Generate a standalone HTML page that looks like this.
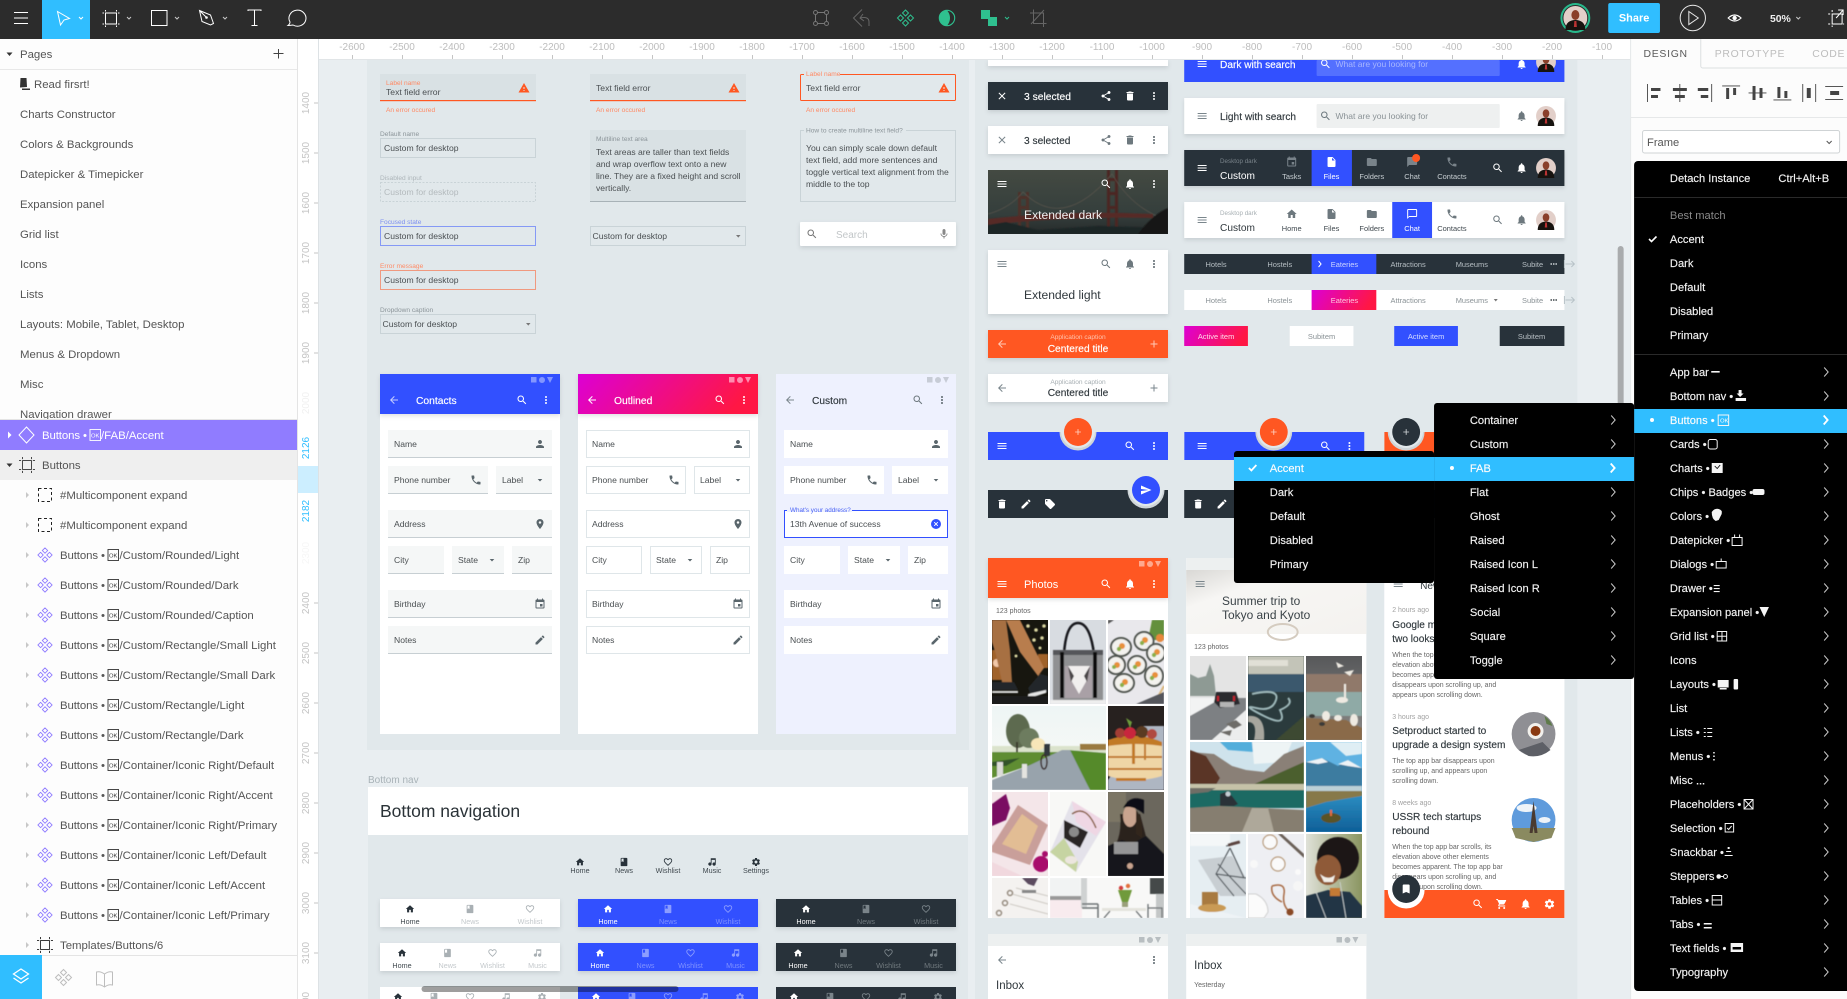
<!DOCTYPE html>
<html lang="en"><head><meta charset="utf-8"><title>Figma</title>
<style>
html,body{margin:0;padding:0;background:#e9eef1;width:1847px;height:999px;overflow:hidden}
svg{display:block;font-family:"Liberation Sans",sans-serif}
.s{font-size:11.4px;fill:#555}
.r{font-size:10px;fill:#bdbdbd;text-anchor:middle}
.rv{font-size:10px;fill:#c4c4c4;text-anchor:middle}
.t{font-size:8.6px;fill:#4a4f52}
.tl{font-size:6.6px;fill:#8b9499}
.e{font-size:6.6px;fill:#ff8a65}
.m{font-size:11.2px;fill:#f2f2f2;stroke:#f2f2f2;stroke-width:.15px}
.h{font-size:10.3px;fill:#fff;stroke:#fff;stroke-width:.15px}
.n{font-size:7.2px;text-anchor:middle}
.tb{font-size:7.5px;text-anchor:middle}
.b{font-size:10.2px;fill:#30383d;stroke:#30383d;stroke-width:.15px}
.a{font-size:7px;fill:#666}
.sh{filter:drop-shadow(0 2px 2px rgba(40,50,60,.14))}
</style></head><body>
<svg xmlns="http://www.w3.org/2000/svg" width="1847" height="999" viewBox="0 0 1847 999">
<defs>
<filter id="bl" x="-5%" y="-5%" width="110%" height="110%"><feGaussianBlur stdDeviation=".55"/></filter>
<symbol id="menu" viewBox="0 0 24 24"><path d="M3 18h18v-2H3v2zm0-5h18v-2H3v2zm0-7v2h18V6H3z"/></symbol>
<symbol id="search" viewBox="0 0 24 24"><path d="M15.5 14h-.79l-.28-.27C15.41 12.59 16 11.11 16 9.5 16 5.91 13.09 3 9.5 3S3 5.91 3 9.5 5.91 16 9.5 16c1.61 0 3.09-.59 4.23-1.57l.27.28v.79l5 4.99L20.49 19l-4.99-5zm-6 0C7.01 14 5 11.99 5 9.5S7.01 5 9.5 5 14 7.01 14 9.5 11.99 14 9.5 14z"/></symbol>
<symbol id="dots" viewBox="0 0 24 24"><path d="M12 8c1.1 0 2-.9 2-2s-.9-2-2-2-2 .9-2 2 .9 2 2 2zm0 2c-1.1 0-2 .9-2 2s.9 2 2 2 2-.9 2-2-.9-2-2-2zm0 6c-1.1 0-2 .9-2 2s.9 2 2 2 2-.9 2-2-.9-2-2-2z"/></symbol>
<symbol id="back" viewBox="0 0 24 24"><path d="M20 11H7.83l5.59-5.59L12 4l-8 8 8 8 1.41-1.41L7.83 13H20v-2z"/></symbol>
<symbol id="person" viewBox="0 0 24 24"><path d="M12 12c2.21 0 4-1.79 4-4s-1.79-4-4-4-4 1.79-4 4 1.79 4 4 4zm0 2c-2.67 0-8 1.34-8 4v2h16v-2c0-2.66-5.33-4-8-4z"/></symbol>
<symbol id="phone" viewBox="0 0 24 24"><path d="M6.62 10.79c1.44 2.83 3.76 5.14 6.59 6.59l2.2-2.2c.27-.27.67-.36 1.02-.24 1.12.37 2.33.57 3.57.57.55 0 1 .45 1 1V20c0 .55-.45 1-1 1-9.39 0-17-7.61-17-17 0-.55.45-1 1-1h3.5c.55 0 1 .45 1 1 0 1.25.2 2.45.57 3.57.11.35.03.74-.25 1.02l-2.2 2.2z"/></symbol>
<symbol id="place" viewBox="0 0 24 24"><path d="M12 2C8.13 2 5 5.13 5 9c0 5.25 7 13 7 13s7-7.75 7-13c0-3.87-3.13-7-7-7zm0 9.5c-1.38 0-2.5-1.12-2.5-2.5s1.12-2.5 2.5-2.5 2.5 1.12 2.5 2.5-1.12 2.5-2.5 2.5z"/></symbol>
<symbol id="event" viewBox="0 0 24 24"><path d="M17 12h-5v5h5v-5zM16 1v2H8V1H6v2H5c-1.11 0-1.99.9-1.99 2L3 19c0 1.1.89 2 2 2h14c1.1 0 2-.9 2-2V5c0-1.1-.9-2-2-2h-1V1h-2zm3 18H5V8h14v11z"/></symbol>
<symbol id="edit" viewBox="0 0 24 24"><path d="M3 17.25V21h3.75L17.81 9.94l-3.75-3.75L3 17.25zM20.71 7.04c.39-.39.39-1.02 0-1.41l-2.34-2.34c-.39-.39-1.02-.39-1.41 0l-1.83 1.83 3.75 3.75 1.83-1.83z"/></symbol>
<symbol id="trash" viewBox="0 0 24 24"><path d="M6 19c0 1.1.9 2 2 2h8c1.1 0 2-.9 2-2V7H6v12zM19 4h-3.5l-1-1h-5l-1 1H5v2h14V4z"/></symbol>
<symbol id="share" viewBox="0 0 24 24"><path d="M18 16.08c-.76 0-1.44.3-1.96.77L8.91 12.7c.05-.23.09-.46.09-.7s-.04-.47-.09-.7l7.05-4.11c.54.5 1.25.81 2.04.81 1.66 0 3-1.34 3-3s-1.34-3-3-3-3 1.34-3 3c0 .24.04.47.09.7L8.04 9.81C7.5 9.31 6.79 9 6 9c-1.66 0-3 1.34-3 3s1.34 3 3 3c.79 0 1.5-.31 2.04-.81l7.12 4.16c-.05.21-.08.43-.08.65 0 1.61 1.31 2.92 2.92 2.92 1.61 0 2.92-1.31 2.92-2.92s-1.31-2.92-2.92-2.92z"/></symbol>
<symbol id="close" viewBox="0 0 24 24"><path d="M19 6.41L17.59 5 12 10.59 6.41 5 5 6.41 10.59 12 5 17.59 6.41 19 12 13.41 17.59 19 19 17.59 13.41 12z"/></symbol>
<symbol id="bell" viewBox="0 0 24 24"><path d="M12 22c1.1 0 2-.9 2-2h-4c0 1.1.89 2 2 2zm6-6v-5c0-3.07-1.64-5.64-4.5-6.32V4c0-.83-.67-1.5-1.5-1.5s-1.5.67-1.5 1.5v.68C7.63 5.36 6 7.92 6 11v5l-2 2v1h16v-1l-2-2z"/></symbol>
<symbol id="add" viewBox="0 0 24 24"><path d="M19 13h-6v6h-2v-6H5v-2h6V5h2v6h6v2z"/></symbol>
<symbol id="home" viewBox="0 0 24 24"><path d="M10 20v-6h4v6h5v-8h3L12 3 2 12h3v8z"/></symbol>
<symbol id="heart" viewBox="0 0 24 24"><path d="M16.5 3c-1.74 0-3.41.81-4.5 2.09C10.91 3.81 9.24 3 7.5 3 4.42 3 2 5.42 2 8.5c0 3.78 3.4 6.86 8.55 11.54L12 21.35l1.45-1.32C18.6 15.36 22 12.28 22 8.5 22 5.42 19.58 3 16.5 3zm-4.4 15.55l-.1.1-.1-.1C7.14 14.24 4 11.39 4 8.5 4 6.5 5.5 5 7.5 5c1.54 0 3.04.99 3.57 2.36h1.87C13.46 5.99 14.96 5 16.5 5c2 0 3.5 1.5 3.5 3.5 0 2.89-3.14 5.74-7.9 10.05z"/></symbol>
<symbol id="music" viewBox="0 0 24 24"><path d="M9 3v10.55A4 4 0 1 0 11 17V7h8v6.55A4 4 0 1 0 21 17V3H9z"/></symbol>
<symbol id="gear" viewBox="0 0 24 24"><path d="M19.14 12.94c.04-.3.06-.61.06-.94 0-.32-.02-.64-.07-.94l2.03-1.58c.18-.14.23-.41.12-.61l-1.92-3.32c-.12-.22-.37-.29-.59-.22l-2.39.96c-.5-.38-1.03-.7-1.62-.94l-.36-2.54c-.04-.24-.24-.41-.48-.41h-3.84c-.24 0-.43.17-.47.41l-.36 2.54c-.59.24-1.13.57-1.62.94l-2.39-.96c-.22-.08-.47 0-.59.22L2.74 8.87c-.12.21-.08.47.12.61l2.03 1.58c-.05.3-.09.63-.09.94s.02.64.07.94l-2.03 1.58c-.18.14-.23.41-.12.61l1.92 3.32c.12.22.37.29.59.22l2.39-.96c.5.38 1.03.7 1.62.94l.36 2.54c.05.24.24.41.48.41h3.84c.24 0 .44-.17.47-.41l.36-2.54c.59-.24 1.13-.56 1.62-.94l2.39.96c.22.08.47 0 .59-.22l1.92-3.32c.12-.22.07-.47-.12-.61l-2.01-1.58zM12 15.6c-1.98 0-3.6-1.62-3.6-3.6s1.62-3.6 3.6-3.6 3.6 1.62 3.6 3.6-1.62 3.6-3.6 3.6z"/></symbol>
<symbol id="folder" viewBox="0 0 24 24"><path d="M10 4H4c-1.1 0-1.99.9-1.99 2L2 18c0 1.1.9 2 2 2h16c1.1 0 2-.9 2-2V8c0-1.1-.9-2-2-2h-8l-2-2z"/></symbol>
<symbol id="file" viewBox="0 0 24 24"><path d="M6 2c-1.1 0-1.99.9-1.99 2L4 20c0 1.1.89 2 1.99 2H18c1.1 0 2-.9 2-2V8l-6-6H6zm7 7V3.5L18.5 9H13z"/></symbol>
<symbol id="chat" viewBox="0 0 24 24"><path d="M20 2H4c-1.1 0-2 .9-2 2v18l4-4h14c1.1 0 2-.9 2-2V4c0-1.1-.9-2-2-2z"/></symbol>
<symbol id="chato" viewBox="0 0 24 24"><path d="M20 2H4c-1.1 0-2 .9-2 2v18l4-4h14c1.1 0 2-.9 2-2V4c0-1.1-.9-2-2-2zm0 14H6l-2 2V4h16v12z"/></symbol>
<symbol id="warn" viewBox="0 0 24 24"><path d="M1 21h22L12 2 1 21zm12-3h-2v-2h2v2zm0-4h-2v-4h2v4z"/></symbol>
<symbol id="mic" viewBox="0 0 24 24"><path d="M12 14c1.66 0 3-1.34 3-3V5c0-1.66-1.34-3-3-3S9 3.34 9 5v6c0 1.66 1.34 3 3 3zm5.3-3c0 3-2.54 5.1-5.3 5.1S6.7 14 6.7 11H5c0 3.41 2.72 6.23 6 6.72V21h2v-3.28c3.28-.48 6-3.3 6-6.72h-1.7z"/></symbol>
<symbol id="send" viewBox="0 0 24 24"><path d="M2.01 21L23 12 2.01 3 2 10l15 2-15 2z"/></symbol>
<symbol id="tag" viewBox="0 0 24 24"><path d="M21.41 11.58l-9-9C12.05 2.22 11.55 2 11 2H4c-1.1 0-2 .9-2 2v7c0 .55.22 1.05.59 1.42l9 9c.36.36.86.58 1.41.58.55 0 1.05-.22 1.41-.59l7-7c.37-.36.59-.86.59-1.41 0-.55-.23-1.06-.59-1.42zM5.5 7C4.67 7 4 6.33 4 5.5S4.67 4 5.5 4 7 4.67 7 5.5 6.33 7 5.5 7z"/></symbol>
<symbol id="cart" viewBox="0 0 24 24"><path d="M7 18c-1.1 0-1.99.9-1.99 2S5.9 22 7 22s2-.9 2-2-.9-2-2-2zM1 2v2h2l3.6 7.59-1.35 2.45c-.16.28-.25.61-.25.96 0 1.1.9 2 2 2h12v-2H7.42c-.14 0-.25-.11-.25-.25l.03-.12.9-1.63h7.45c.75 0 1.41-.41 1.75-1.03l3.58-6.49c.08-.14.12-.31.12-.48 0-.55-.45-1-1-1H5.21l-.94-2H1zm16 16c-1.1 0-1.99.9-1.99 2s.89 2 1.99 2 2-.9 2-2-.9-2-2-2z"/></symbol>
<symbol id="mark" viewBox="0 0 24 24"><path d="M17 3H7c-1.1 0-1.99.9-1.99 2L5 21l7-3 7 3V5c0-1.1-.9-2-2-2z"/></symbol>
<symbol id="news" viewBox="0 0 24 24"><path d="M18 2H6c-1.1 0-2 .9-2 2v16c0 1.1.9 2 2 2h12c1.1 0 2-.9 2-2V4c0-1.1-.9-2-2-2zM6 4h5v8l-2.5-1.5L6 12V4z"/></symbol>
<symbol id="st" viewBox="0 0 24 10"><rect x="0" y="2" width="5.5" height="5.5"/><circle cx="11" cy="5" r="3"/><path d="M16 2h6l-3 6z"/></symbol>
<symbol id="cmp" viewBox="0 0 18 18"><path d="M9 1l3 3-3 3-3-3zM14 6l3 3-3 3-3-3zM9 11l3 3-3 3-3-3zM4 6l3 3-3 3-3-3z"/></symbol>
<symbol id="frm" viewBox="0 0 18 18"><rect x="4" y="4" width="10" height="10"/><path d="M4 0v2.4M14 0v2.4M4 15.6V18M14 15.6V18M0 4h2.4M0 14h2.4M15.6 4H18M15.6 14H18"/></symbol>
<symbol id="av" viewBox="0 0 24 24"><circle cx="12" cy="12" r="12" fill="#e2cfc9"/><path d="M2 24c0-7 4-10 10-10s10 3 10 10z" fill="#17130f"/><ellipse cx="12" cy="9" rx="4" ry="5" fill="#8a3f2a"/><path d="M11 15h2l.5 6h-3z" fill="#b33"/></symbol>
<path id="ch" d="M-2-4.5l4 4.5-4 4.5" fill="none" stroke="#c8c8c8" stroke-width="1"/>
<path id="chw" d="M-2.5-4.5l4 4.5-4 4.5" fill="none" stroke="#fff" stroke-width="1.8"/>
<linearGradient id="grad" x1="0" y1="0" x2="1" y2=".2"><stop offset="0" stop-color="#dc00d4"/><stop offset="1" stop-color="#ff1744"/></linearGradient>
<linearGradient id="br" x1="0" y1="0" x2="0" y2="1"><stop offset="0" stop-color="#444a42"/><stop offset=".7" stop-color="#343e3c"/><stop offset="1" stop-color="#262a2a"/></linearGradient>
<linearGradient id="tk" x1="0" y1="0" x2="1" y2="1"><stop offset="0" stop-color="#d9d8d5"/><stop offset=".3" stop-color="#f7f6f4"/><stop offset="1" stop-color="#f4f2ef"/></linearGradient>
<linearGradient id="v1" x1="0" y1="0" x2="0" y2="1"><stop offset="0" stop-color="#eef5f5"/><stop offset="1" stop-color="#fbfbf6"/></linearGradient>
<linearGradient id="lake" x1="0" y1="0" x2="0" y2="1"><stop offset="0" stop-color="#2c8cc0"/><stop offset="1" stop-color="#0e5f98"/></linearGradient>
<linearGradient id="sw" x1="0" y1="0" x2="0" y2="1"><stop offset="0" stop-color="#57585a"/><stop offset="1" stop-color="#8b8a88"/></linearGradient>
<linearGradient id="wh" x1="0" y1="0" x2="1" y2="0"><stop offset="0" stop-color="#dfe1d8"/><stop offset="1" stop-color="#8a9560"/></linearGradient>
</defs>

<rect width="1847" height="999" fill="#e9eef1"/>
<rect x="367" y="60" width="602" height="690" fill="#e1e8eb"/>
<rect x="975" y="60" width="602.400" height="939" fill="#e1e8eb"/>
<rect x="368" y="787" width="600" height="212" fill="#e1e8eb"/>

<!-- Text field col 1 -->
<rect x="380" y="74" width="156" height="27" fill="#d9e1e4"/><rect x="380" y="100" width="156" height="1.2" fill="#ff5722"/>
<text x="386" y="85" class="e">Label name</text><text x="386" y="95" class="t">Text field error</text>
<use href="#warn" x="518" y="82" width="12" height="12" fill="#ff5722"/>
<text x="386" y="112" class="e">An error occured</text>
<text x="380" y="136" class="tl">Default name</text>
<rect x="380.5" y="138.5" width="155" height="19" fill="none" stroke="#c9d3d7"/><text x="384" y="151" class="t">Custom for desktop</text>
<text x="380" y="180" class="tl" opacity=".6">Disabled input</text>
<rect x="380.5" y="182.5" width="155" height="19" fill="none" stroke="#c9d3d7" stroke-dasharray="2 1.5"/><text x="384" y="195" class="t" opacity=".3">Custom for desktop</text>
<text x="380" y="224" class="tl" style="fill:#7d8ff0">Focused state</text>
<rect x="380.5" y="226.5" width="155" height="19" fill="none" stroke="#8599f5"/><text x="384" y="239" class="t">Custom for desktop</text>
<text x="380" y="268" class="e">Error message</text>
<rect x="380.5" y="270.5" width="155" height="19" fill="none" stroke="#f0997f"/><text x="384" y="283" class="t">Custom for desktop</text>
<text x="380" y="312" class="tl">Dropdown caption</text>
<rect x="380.5" y="314.5" width="155" height="19" fill="none" stroke="#c9d3d7"/><text x="382.5" y="327" class="t">Custom for desktop</text><path d="M526 323h4.5l-2.2 2.6z" fill="#777"/>

<!-- Text field col 2 -->
<rect x="590" y="74" width="156" height="27" fill="#d9e1e4"/><rect x="590" y="100" width="156" height="1.2" fill="#ff5722"/>
<text x="596" y="91" class="t">Text field error</text><use href="#warn" x="728" y="82" width="12" height="12" fill="#ff5722"/>
<text x="596" y="112" class="e">An error occured</text>
<rect x="590" y="130" width="156" height="72" fill="#d9e1e4"/><rect x="590" y="201" width="156" height="1" fill="#a8b2b7"/>
<text x="596" y="141" class="tl">Multiline text area</text>
<text x="596" y="155" class="t">Text areas are taller than text fields</text>
<text x="596" y="167" class="t">and wrap overflow text onto a new</text>
<text x="596" y="179" class="t">line. They are a fixed height and scroll</text>
<text x="596" y="191" class="t">vertically.</text>
<rect x="590.5" y="226.5" width="155" height="19" fill="none" stroke="#c9d3d7"/><text x="592.5" y="239" class="t">Custom for desktop</text><path d="M736 235h4.5l-2.2 2.6z" fill="#777"/>

<!-- Text field col 3 -->
<rect x="800.5" y="74.5" width="155" height="26" rx="1" fill="none" stroke="#ff5722"/><rect x="804" y="72" width="36" height="5" fill="#e1e8eb"/><text x="806" y="76" class="e">Label name</text>
<text x="806" y="91" class="t">Text field error</text><use href="#warn" x="938" y="82" width="12" height="12" fill="#ff5722"/>
<text x="806" y="112" class="e">An error occured</text>
<rect x="800.5" y="130.5" width="155" height="71" fill="none" stroke="#c9d3d7"/><rect x="804" y="128" width="102" height="5" fill="#e1e8eb"/><text x="806" y="132.500" class="tl">How to create multiline text field?</text>
<text x="806" y="151" class="t">You can simply scale down default</text>
<text x="806" y="163" class="t">text field, add more sentences and</text>
<text x="806" y="175" class="t">toggle vertical text alignment from the</text>
<text x="806" y="187" class="t">middle to the top</text>
<rect class="sh" x="800" y="222" width="156" height="24" rx="1" fill="#fff"/>
<use href="#search" x="806" y="228" width="12" height="12" fill="#777"/><text x="836" y="238" font-size="10" fill="#c2c6c8">Search</text><use href="#mic" x="938" y="228" width="12" height="12" fill="#888"/>

<!-- Phone cards -->
<rect x="380" y="374" width="180" height="360" fill="#fff"/><rect class="sh" x="380" y="374" width="180" height="40" fill="#3250ff"/>
<use href="#st" x="531" y="375" width="24" height="10" fill="#8396ff"/>
<use href="#back" x="388" y="394" width="12" height="12" fill="#c5cdff"/><text x="416" y="404" class="h">Contacts</text>
<use href="#search" x="516" y="394" width="12" height="12" fill="#fff"/><use href="#dots" x="540" y="394" width="12" height="12" fill="#fff"/>
<g fill="#f5f7f7"><rect x="388" y="430" width="164" height="28"/><rect x="388" y="466" width="100" height="28"/><rect x="496" y="466" width="56" height="28"/><rect x="388" y="510" width="164" height="28"/><rect x="388" y="546" width="56" height="28"/><rect x="452" y="546" width="52" height="28"/><rect x="512" y="546" width="40" height="28"/><rect x="388" y="590" width="164" height="28"/><rect x="388" y="626" width="164" height="28"/></g>
<g fill="#c7cfd3"><rect x="388" y="457" width="164" height="1"/><rect x="388" y="493" width="100" height="1"/><rect x="496" y="493" width="56" height="1"/><rect x="388" y="537" width="164" height="1"/><rect x="388" y="573" width="56" height="1"/><rect x="452" y="573" width="52" height="1"/><rect x="512" y="573" width="40" height="1"/><rect x="388" y="617" width="164" height="1"/><rect x="388" y="653" width="164" height="1"/></g>
<text x="394" y="447" class="t">Name</text><text x="394" y="483" class="t">Phone number</text><text x="502" y="483" class="t">Label</text><text x="394" y="527" class="t">Address</text><text x="394" y="563" class="t">City</text><text x="458" y="563" class="t">State</text><text x="518" y="563" class="t">Zip</text><text x="394" y="607" class="t">Birthday</text><text x="394" y="643" class="t">Notes</text>
<g fill="#5a666c"><use href="#person" x="534" y="438" width="12" height="12"/><use href="#phone" x="470" y="474" width="12" height="12"/><path d="M537.700 479h4.600l-2.300 2.500z"/><use href="#place" x="534" y="518" width="12" height="12"/><path d="M489.700 559h4.600l-2.300 2.500z"/><use href="#event" x="534" y="598" width="12" height="12"/><use href="#edit" x="534" y="634" width="12" height="12"/></g>

<rect x="578" y="374" width="180" height="360" fill="#fff"/><rect class="sh" x="578" y="374" width="180" height="40" fill="url(#grad)"/>
<use href="#st" x="729" y="375" width="24" height="10" fill="#ff8db0"/>
<use href="#back" x="586" y="394" width="12" height="12" fill="#fff"/><text x="614" y="404" class="h">Outlined</text>
<use href="#search" x="714" y="394" width="12" height="12" fill="#fff"/><use href="#dots" x="738" y="394" width="12" height="12" fill="#fff"/>
<g fill="#fff" stroke="#dfe6e9"><rect x="586.500" y="430.500" width="163" height="27"/><rect x="586.500" y="466.500" width="99" height="27"/><rect x="694.500" y="466.500" width="55" height="27"/><rect x="586.500" y="510.500" width="163" height="27"/><rect x="586.500" y="546.500" width="55" height="27"/><rect x="650.500" y="546.500" width="51" height="27"/><rect x="710.500" y="546.500" width="39" height="27"/><rect x="586.500" y="590.500" width="163" height="27"/><rect x="586.500" y="626.500" width="163" height="27"/></g>
<text x="592" y="447" class="t">Name</text><text x="592" y="483" class="t">Phone number</text><text x="700" y="483" class="t">Label</text><text x="592" y="527" class="t">Address</text><text x="592" y="563" class="t">City</text><text x="656" y="563" class="t">State</text><text x="716" y="563" class="t">Zip</text><text x="592" y="607" class="t">Birthday</text><text x="592" y="643" class="t">Notes</text>
<g fill="#5a666c"><use href="#person" x="732" y="438" width="12" height="12"/><use href="#phone" x="668" y="474" width="12" height="12"/><path d="M735.700 479h4.600l-2.300 2.500z"/><use href="#place" x="732" y="518" width="12" height="12"/><path d="M687.700 559h4.600l-2.300 2.500z"/><use href="#event" x="732" y="598" width="12" height="12"/><use href="#edit" x="732" y="634" width="12" height="12"/></g>

<rect x="776" y="374" width="180" height="360" fill="#eef1fe"/>
<use href="#st" x="927" y="375" width="24" height="10" fill="#c7ccd6"/>
<use href="#back" x="784" y="394" width="12" height="12" fill="#7a868c"/><text x="812" y="404" class="b">Custom</text>
<use href="#search" x="912" y="394" width="12" height="12" fill="#6d787e"/><use href="#dots" x="936" y="394" width="12" height="12" fill="#5a666c"/>
<g fill="#fff"><rect x="784" y="430" width="164" height="28"/><rect x="784" y="466" width="100" height="28"/><rect x="892" y="466" width="56" height="28"/><rect x="784.500" y="510.500" width="163" height="27" stroke="#3250ff"/><rect x="784" y="546" width="56" height="28"/><rect x="848" y="546" width="52" height="28"/><rect x="908" y="546" width="40" height="28"/><rect x="784" y="590" width="164" height="28"/><rect x="784" y="626" width="164" height="28"/></g>
<rect x="787" y="506" width="65" height="6" fill="#eef1fe"/><text x="790" y="512" font-size="6.300" fill="#4a63f5">What's your address?</text>
<text x="790" y="447" class="t">Name</text><text x="790" y="483" class="t">Phone number</text><text x="898" y="483" class="t">Label</text><text x="790" y="527" class="t">13th Avenue of success</text><text x="790" y="563" class="t">City</text><text x="854" y="563" class="t">State</text><text x="914" y="563" class="t">Zip</text><text x="790" y="607" class="t">Birthday</text><text x="790" y="643" class="t">Notes</text>
<g fill="#5a666c"><use href="#person" x="930" y="438" width="12" height="12"/><use href="#phone" x="866" y="474" width="12" height="12"/><path d="M933.700 479h4.600l-2.300 2.500z"/><path d="M885.700 559h4.600l-2.300 2.500z"/><use href="#event" x="930" y="598" width="12" height="12"/><use href="#edit" x="930" y="634" width="12" height="12"/></g>
<circle cx="936" cy="524" r="5" fill="#3250ff"/><path d="M934.200 522.200l3.600 3.600m0-3.600l-3.600 3.600" stroke="#fff" stroke-width=".9"/>

<!-- Bottom nav section -->
<text x="368" y="783" font-size="10" fill="#a8b2b7">Bottom nav</text>
<rect x="368" y="787" width="600" height="48" fill="#fff"/>
<text x="380" y="817" font-size="17.500" fill="#2a3237">Bottom navigation</text>
<g fill="#28323a"><use href="#home" x="575" y="857" width="10" height="10"/><use href="#news" x="619" y="857" width="10" height="10"/><use href="#heart" x="663" y="857" width="10" height="10"/><use href="#music" x="707" y="857" width="10" height="10"/><use href="#gear" x="751" y="857" width="10" height="10"/></g>
<g fill="#40494f"><text x="580" y="873" class="n">Home</text><text x="624" y="873" class="n">News</text><text x="668" y="873" class="n">Wishlist</text><text x="712" y="873" class="n">Music</text><text x="756" y="873" class="n">Settings</text></g>
<rect class="sh" x="380" y="899" width="180" height="28" fill="#fff"/><rect class="sh" x="578" y="899" width="180" height="28" fill="#3250ff"/><rect class="sh" x="776" y="899" width="180" height="28" fill="#28323a"/>
<rect class="sh" x="380" y="943" width="180" height="28" fill="#fff"/><rect class="sh" x="578" y="943" width="180" height="28" fill="#3250ff"/><rect class="sh" x="776" y="943" width="180" height="28" fill="#28323a"/>
<rect x="380" y="987" width="180" height="12" fill="#fff"/><rect x="578" y="987" width="180" height="12" fill="#3250ff"/><rect x="776" y="987" width="180" height="12" fill="#28323a"/>
<use href="#home" x="405" y="904" width="10" height="10" fill="#28323a"/><use href="#news" x="465" y="904" width="10" height="10" fill="#a9b0b4"/><use href="#heart" x="525" y="904" width="10" height="10" fill="#a9b0b4"/>
<text x="410" y="924" class="n" fill="#40494f">Home</text><text x="470" y="924" class="n" fill="#c4c9cc">News</text><text x="530" y="924" class="n" fill="#c4c9cc">Wishlist</text>
<use href="#home" x="603" y="904" width="10" height="10" fill="#fff"/><use href="#news" x="663" y="904" width="10" height="10" fill="#8c9dff"/><use href="#heart" x="723" y="904" width="10" height="10" fill="#8c9dff"/>
<text x="608" y="924" class="n" fill="#fff">Home</text><text x="668" y="924" class="n" fill="#7f91ff">News</text><text x="728" y="924" class="n" fill="#7f91ff">Wishlist</text>
<use href="#home" x="801" y="904" width="10" height="10" fill="#fff"/><use href="#news" x="861" y="904" width="10" height="10" fill="#7a848a"/><use href="#heart" x="921" y="904" width="10" height="10" fill="#7a848a"/>
<text x="806" y="924" class="n" fill="#fff">Home</text><text x="866" y="924" class="n" fill="#70797e">News</text><text x="926" y="924" class="n" fill="#70797e">Wishlist</text>
<use href="#home" x="397" y="948" width="10" height="10" fill="#28323a"/><use href="#news" x="442.500" y="948" width="10" height="10" fill="#a9b0b4"/><use href="#heart" x="487.500" y="948" width="10" height="10" fill="#a9b0b4"/><use href="#music" x="532.500" y="948" width="10" height="10" fill="#a9b0b4"/>
<text x="402" y="968" class="n" fill="#40494f">Home</text><text x="447.500" y="968" class="n" fill="#c4c9cc">News</text><text x="492.500" y="968" class="n" fill="#c4c9cc">Wishlist</text><text x="537.500" y="968" class="n" fill="#c4c9cc">Music</text>
<use href="#home" x="595" y="948" width="10" height="10" fill="#fff"/><use href="#news" x="640.500" y="948" width="10" height="10" fill="#8c9dff"/><use href="#heart" x="685.500" y="948" width="10" height="10" fill="#8c9dff"/><use href="#music" x="730.500" y="948" width="10" height="10" fill="#8c9dff"/>
<text x="600" y="968" class="n" fill="#fff">Home</text><text x="645.500" y="968" class="n" fill="#7f91ff">News</text><text x="690.500" y="968" class="n" fill="#7f91ff">Wishlist</text><text x="735.500" y="968" class="n" fill="#7f91ff">Music</text>
<use href="#home" x="793" y="948" width="10" height="10" fill="#fff"/><use href="#news" x="838.500" y="948" width="10" height="10" fill="#7a848a"/><use href="#heart" x="883.500" y="948" width="10" height="10" fill="#7a848a"/><use href="#music" x="928.500" y="948" width="10" height="10" fill="#7a848a"/>
<text x="798" y="968" class="n" fill="#fff">Home</text><text x="843.500" y="968" class="n" fill="#70797e">News</text><text x="888.500" y="968" class="n" fill="#70797e">Wishlist</text><text x="933.500" y="968" class="n" fill="#70797e">Music</text>
<g fill="#a9b0b4"><use href="#home" x="393" y="992" width="10" height="10" fill="#28323a"/><use href="#news" x="429" y="992" width="10" height="10"/><use href="#heart" x="465" y="992" width="10" height="10"/><use href="#music" x="501" y="992" width="10" height="10"/><use href="#gear" x="537" y="992" width="10" height="10"/></g>
<g fill="#8c9dff"><use href="#home" x="591" y="992" width="10" height="10" fill="#fff"/><use href="#news" x="627" y="992" width="10" height="10"/><use href="#heart" x="663" y="992" width="10" height="10"/><use href="#music" x="699" y="992" width="10" height="10"/><use href="#gear" x="735" y="992" width="10" height="10"/></g>
<g fill="#7a848a"><use href="#home" x="789" y="992" width="10" height="10" fill="#fff"/><use href="#news" x="825" y="992" width="10" height="10"/><use href="#heart" x="861" y="992" width="10" height="10"/><use href="#music" x="897" y="992" width="10" height="10"/><use href="#gear" x="933" y="992" width="10" height="10"/></g>
<rect x="421.500" y="986" width="257" height="6" rx="3" fill="#000" opacity=".38"/>

<!-- Col A app bars -->
<rect class="sh" x="988" y="60" width="180" height="6" fill="#fff"/>
<rect class="sh" x="988" y="82" width="180" height="28" fill="#28323a"/>
<use href="#close" x="996" y="90" width="12" height="12" fill="#fff"/><text x="1024" y="100" class="h">3 selected</text>
<use href="#share" x="1100" y="90" width="12" height="12" fill="#fff"/><use href="#trash" x="1124" y="90" width="12" height="12" fill="#fff"/><use href="#dots" x="1148" y="90" width="12" height="12" fill="#fff"/>
<rect class="sh" x="988" y="126" width="180" height="28" fill="#fff"/>
<use href="#close" x="996" y="134" width="12" height="12" fill="#7a868c"/><text x="1024" y="144" class="b">3 selected</text>
<use href="#share" x="1100" y="134" width="12" height="12" fill="#6d787e"/><use href="#trash" x="1124" y="134" width="12" height="12" fill="#6d787e"/><use href="#dots" x="1148" y="134" width="12" height="12" fill="#5a666c"/>
<svg x="988" y="170" width="180" height="64"><rect width="180" height="64" fill="url(#br)"/><g filter="url(#bl)"><path d="M30 22h3v36h-3zM38 22h3v36h-3zM30 26h11v3H30zM30 36h11v3H30z" fill="#4e302a"/><path d="M119 0h3v64h-3zM127 0h3v64h-3zM119 8h11v3h-11zM119 22h11v3h-11zM119 36h11v3h-11z" fill="#4c2824"/><path d="M0 44Q22 38 35 22Q75 62 124 4Q145 40 180 50" fill="none" stroke="#5a544c" stroke-width=".7"/><path d="M0 49Q80 40 165 44v4Q80 46 0 55z" fill="#562c26"/><path d="M0 64V55l18-3 32 8 60-4 70 2v6z" fill="#1f2527"/><path d="M150 64Q165 44 180 38v26z" fill="#181716"/></g></svg>
<use href="#menu" x="996" y="178" width="12" height="12" fill="#fff"/><use href="#search" x="1100" y="178" width="12" height="12" fill="#fff"/><use href="#bell" x="1124" y="178" width="12" height="12" fill="#fff"/><use href="#dots" x="1148" y="178" width="12" height="12" fill="#fff"/>
<text x="1024" y="219" font-size="12.100" fill="#eef0f0">Extended dark</text>
<rect class="sh" x="988" y="250" width="180" height="64" fill="#fff"/>
<use href="#menu" x="996" y="258" width="12" height="12" fill="#7a868c"/><use href="#search" x="1100" y="258" width="12" height="12" fill="#6d787e"/><use href="#bell" x="1124" y="258" width="12" height="12" fill="#6d787e"/><use href="#dots" x="1148" y="258" width="12" height="12" fill="#5a666c"/>
<text x="1024" y="299" font-size="12.100" fill="#30383d">Extended light</text>
<rect class="sh" x="988" y="330" width="180" height="28" fill="#ff5722"/>
<use href="#back" x="996" y="338" width="12" height="12" fill="#ffc9b5"/><use href="#add" x="1148" y="338" width="12" height="12" fill="#ffc9b5"/>
<text x="1078" y="339" font-size="6.600" text-anchor="middle" fill="#ffc4ae">Application caption</text><text x="1078" y="352" font-size="10.200" text-anchor="middle" fill="#fff" stroke="#fff" stroke-width=".15">Centered title</text>
<rect class="sh" x="988" y="374" width="180" height="28" fill="#fff"/>
<use href="#back" x="996" y="382" width="12" height="12" fill="#7a868c"/><use href="#add" x="1148" y="382" width="12" height="12" fill="#7a868c"/>
<text x="1078" y="384" font-size="6.600" text-anchor="middle" fill="#a7afb3">Application caption</text><text x="1078" y="396" font-size="10.200" text-anchor="middle" class="b">Centered title</text>
<svg x="988" y="432" width="180" height="30"><rect width="180" height="28" fill="#3250ff"/><circle cx="90" cy="0" r="18.500" fill="#cfd5d8"/><circle cx="90" cy="-1" r="17" fill="#e1e8eb"/></svg>
<circle cx="1078" cy="432" r="14" fill="#ff5722"/><use href="#add" x="1073" y="427" width="10" height="10" fill="#ffd5c6"/>
<use href="#menu" x="996" y="440" width="12" height="12" fill="#fff"/><use href="#search" x="1124" y="440" width="12" height="12" fill="#fff"/><use href="#dots" x="1148" y="440" width="12" height="12" fill="#fff"/>
<svg x="988" y="490" width="180" height="30"><rect width="180" height="28" fill="#28323a"/><circle cx="158" cy="0" r="18.500" fill="#cfd5d8"/><circle cx="158" cy="-1" r="17" fill="#e1e8eb"/></svg>
<circle cx="1146" cy="490" r="14" fill="#3250ff"/><use href="#send" x="1140" y="484" width="12" height="12" fill="#fff"/>
<use href="#trash" x="996" y="498" width="12" height="12" fill="#fff"/><use href="#edit" x="1020" y="498" width="12" height="12" fill="#fff"/><use href="#tag" x="1044" y="498" width="12" height="12" fill="#fff"/>
<!-- Photos card -->
<rect x="988" y="558" width="180" height="360" fill="#fff"/><rect class="sh" x="988" y="558" width="180" height="40" fill="#ff5722"/>
<use href="#st" x="1139" y="559" width="24" height="10" fill="#ffa98e"/>
<use href="#menu" x="996" y="578" width="12" height="12" fill="#fff"/><text x="1024" y="588" font-size="11" fill="#fff">Photos</text>
<use href="#search" x="1100" y="578" width="12" height="12" fill="#fff"/><use href="#bell" x="1124" y="578" width="12" height="12" fill="#fff"/><use href="#dots" x="1148" y="578" width="12" height="12" fill="#fff"/>
<text x="996" y="613" class="a">123 photos</text>
<!-- photo tiles A -->
<svg x="992" y="620" width="56" height="84"><rect width="56" height="84" fill="#17160f"/><g filter="url(#bl)"><g fill="#d9d5a0"><circle cx="28" cy="8" r="1.800"/><circle cx="36" cy="6" r="1.800"/><circle cx="44" cy="10" r="1.800"/><circle cx="52" cy="6" r="1.800"/><circle cx="34" cy="18" r="1.800"/><circle cx="42" cy="20" r="1.800"/><circle cx="50" cy="18" r="1.800"/><circle cx="30" cy="30" r="1.500"/><circle cx="38" cy="32" r="1.800"/><circle cx="48" cy="28" r="1.500"/><circle cx="24" cy="36" r="1.500"/></g><path d="M0 30h12v30H0zM46 34h10v14H46z" fill="#a0622a"/><circle cx="5" cy="43" r="4" fill="#f2c8a8"/><path d="M0 0h14l4 30 2 32H10L4 35 0 22z" fill="#a76f42"/><path d="M14 0h14l24 48-6 8-18-24z" fill="#b87d4e"/><path d="M0 62h22l4 8H0z" fill="#24282c"/><path d="M36 68l12-14 8 2v16l-16 6z" fill="#23272a"/><rect x="0" y="71" width="26" height="2" fill="#ddd"/><path d="M36 74l18-4v3l-18 5z" fill="#e6e6e6"/><rect y="76" width="56" height="8" fill="#1d1d1d"/></g></svg>
<svg x="1050" y="620" width="56" height="84"><rect width="56" height="84" fill="#d8dce1"/><g filter="url(#bl)"><path d="M14 34Q16 3 28 3T44 34" fill="none" stroke="#14161a" stroke-width="2.500"/><path d="M3 34h50v46H3z" fill="#8f9092"/><path d="M3 30h50v5H3z" fill="#55575a"/><rect x="10" y="32" width="4" height="46" fill="#111"/><rect x="43" y="32" width="4" height="46" fill="#111"/><rect x="15" y="46" width="27" height="32" fill="#a9a0a6"/><path d="M18 46h22l-3 14-8 14-8-14z" fill="#f1efee"/><path d="M18 46l6 10-3 6zM40 46l-6 10 3 6z" fill="#4c464a"/><rect y="80" width="56" height="4" fill="#eee"/></g></svg>
<svg x="1108" y="620" width="56" height="84"><rect width="56" height="84" fill="#e9e8ec"/><g filter="url(#bl)"><path d="M44 0h12v20H40z" fill="#64903c"/><circle cx="52" cy="18" r="4" fill="#e8873a"/><path d="M0 0h6L0 4z" fill="#555"/><g fill="#f3f2ee" stroke="#50554f" stroke-width="2"><ellipse cx="36" cy="21" rx="9.500" ry="9"/><ellipse cx="13" cy="27" rx="10" ry="9"/><ellipse cx="48" cy="33" rx="9" ry="9"/><ellipse cx="29" cy="45" rx="9" ry="9"/><ellipse cx="8" cy="45" rx="9" ry="9"/><ellipse cx="46" cy="56" rx="9" ry="10"/><ellipse cx="16" cy="63" rx="10" ry="9"/></g><g fill="#e8913a"><circle cx="37" cy="20" r="3"/><circle cx="14" cy="26" r="3"/><circle cx="49" cy="32" r="3"/><circle cx="30" cy="44" r="3"/><circle cx="9" cy="45" r="3"/><circle cx="47" cy="55" r="3"/><circle cx="17" cy="62" r="3"/></g><g fill="#8cb04a"><circle cx="34" cy="23" r="2.200"/><circle cx="11" cy="29" r="2.200"/><circle cx="46" cy="35" r="2.200"/><circle cx="27" cy="47" r="2.200"/><circle cx="6" cy="47" r="2"/><circle cx="44" cy="58" r="2.200"/><circle cx="14" cy="65" r="2.200"/></g><path d="M46 84l10-18" stroke="#d9b57a" stroke-width="2"/><path d="M28 84l28-12v12z" fill="#55575c"/></g></svg>
<svg x="992" y="706" width="114" height="84"><rect width="114" height="84" fill="url(#v1)"/><g filter="url(#bl)"><path d="M0 40h114v10H0z" fill="#dbe3cc"/><path d="M88 38h26v6H88z" fill="#9a7a40"/><ellipse cx="26" cy="25" rx="12" ry="17" fill="#5d6b50"/><ellipse cx="37" cy="32" rx="10" ry="10" fill="#6d7c5e"/><rect x="24" y="36" width="2" height="12" fill="#3d3a2d"/><ellipse cx="46" cy="38" rx="7" ry="6" fill="#f7e6b8"/><path d="M0 46h72L36 60 0 72z" fill="#5f8d30"/><path d="M0 56l28-4-14 8H0z" fill="#30522a"/><path d="M76 44l38 3v37H98z" fill="#548a2c"/><path d="M70 44h8l20 40H0V74l36-14z" fill="#98a3ac"/><rect x="5" y="56" width="6" height="14" fill="#dcdcd8"/><rect x="30" y="58" width="5" height="14" fill="#e4e4e0"/><path d="M52 38h6v12h-6z" fill="#33393e"/><ellipse cx="52" cy="56" rx="3" ry="7" fill="none" stroke="#3a2a2a" stroke-width="1.500"/></g></svg>
<svg x="1108" y="706" width="56" height="84"><rect width="56" height="84" fill="#27211f"/><g filter="url(#bl)"><path d="M36 20h20v64H0V74z" fill="#aeb6c2"/><path d="M0 34q28-8 54 2v34q-26 8-54 0z" fill="#efd6a6"/><g fill="#c27a26"><path d="M0 34q26-10 54 2v4q-26-4-54 0z"/><rect y="50" width="54" height="2"/><rect y="62" width="54" height="2"/><path d="M24 38h3v20h-3zM36 38h2v16h-2z"/><rect x="8" y="72" width="30" height="3"/></g><circle cx="12" cy="27" r="5" fill="#a33c34"/><circle cx="22" cy="27" r="6" fill="#c8253e"/><circle cx="34" cy="26" r="6" fill="#5a3a20"/><circle cx="44" cy="28" r="5" fill="#b04a40"/><path d="M18 12l4 10 2-6z" fill="#6e9b3a"/></g></svg>
<svg x="992" y="792" width="56" height="84"><rect width="56" height="84" fill="#f4e6e9"/><g filter="url(#bl)"><path d="M0 12l14-10 4 14-4 12-14 6z" fill="#7a1062"/><path d="M0 54L26 13l30 20-18 40L0 60z" fill="#c99f9a"/><path d="M10 52l20-30 16 12-12 28z" fill="#e2bd94"/><circle cx="49" cy="72" r="8" fill="#a80e6c"/><circle cx="53" cy="62" r="3" fill="#a80e6c"/><path d="M0 70l30 14H0z" fill="#f1d8de"/></g></svg>
<svg x="1050" y="792" width="56" height="84"><rect width="56" height="84" fill="#f8f8f6"/><g filter="url(#bl)"><path d="M22 9l34 21-30 50L0 60z" fill="#e4e2ea"/><path d="M22 9l34 21-10 14-20-14z" fill="#efd7e4"/><path d="M0 60l14-14 14 24-2 10z" fill="#c6d4a2"/><path d="M14 28l24 12-8 16-16-10z" fill="#2b2627"/><path d="M22 22Q36 12 46 36" fill="none" stroke="#8a6044" stroke-width="1.500"/><circle cx="24" cy="40" r="5" fill="#8a8a8a"/><ellipse cx="21" cy="68" rx="6" ry="4" fill="#ece6df"/></g></svg>
<svg x="1108" y="792" width="56" height="84"><rect width="56" height="84" fill="#6b675d"/><g filter="url(#bl)"><path d="M0 0h18v30H0z" fill="#7c7665"/><path d="M12 22Q14 40 8 52h32l-8-30z" fill="#2a211e"/><path d="M0 84V54l14-6 10 4 14-8 18 18v22z" fill="#16161a"/><ellipse cx="22" cy="24" rx="7" ry="11" fill="#c9a48f"/><path d="M15 16Q22 2 36 8l0 14Q24 12 15 16z" fill="#111114"/><path d="M28 18q8 10 6 28l-6-4z" fill="#32261f"/><path d="M6 50h24v12H6z" fill="#b5b5b5" opacity=".8"/><circle cx="22" cy="74" r="3" fill="#c9a48f"/></g></svg>
<svg x="992" y="878" width="56" height="40"><rect width="56" height="40" fill="#f4f2f0"/><g filter="url(#bl)"><path d="M30 0h16l-4 8-6-2z" fill="#5b4c5f"/><path d="M20 16l36 10M18 26l38 10M24 10l32 8" stroke="#cfcbc5"/><g fill="none" stroke="#968c80" stroke-width="1.500"><circle cx="18" cy="15" r="2.500"/><circle cx="13" cy="25" r="2.500"/><circle cx="7" cy="35" r="2.500"/></g><path d="M30 12h14v3H30z" fill="#888"/></g></svg>
<svg x="1050" y="878" width="114" height="40"><rect width="114" height="40" fill="#f8f8f7"/><g filter="url(#bl)"><rect x="0" y="0" width="30" height="18" fill="#f1f3f3"/><rect x="0" y="18" width="32" height="4" fill="#999"/><rect x="0" y="22" width="32" height="18" fill="#f8ebee"/><rect x="31" y="0" width="6" height="30" fill="#cfd2d2"/><rect x="100" y="0" width="14" height="16" fill="#454849"/><rect x="106" y="16" width="8" height="24" fill="#c4c7c7"/><path d="M32 30h16v10M48 26v14M32 26h16" fill="none" stroke="#6b7072" stroke-width="1.500"/><path d="M52 30h44v3H52z" fill="#e4e3dd"/><path d="M60 33l-6 7M86 33l6 7M98 30h14v10M98 26v14" fill="none" stroke="#6b7072" stroke-width="1.300"/><path d="M68 12h14l-4 12h-6z" fill="#6f9a3a"/><circle cx="71" cy="10" r="2.200" fill="#d33d3d"/><circle cx="78" cy="8" r="2.200" fill="#e2703d"/><path d="M72 24h6v5h-6z" fill="#9aa07a"/></g></svg>
<!-- Inbox 1 -->
<rect x="988" y="934" width="180" height="65" fill="#fff"/><rect x="988" y="934" width="180" height="12" fill="#edf0f0"/>
<use href="#st" x="1139" y="935" width="24" height="10" fill="#b8bec1"/>
<use href="#back" x="996" y="954" width="12" height="12" fill="#7a868c"/><use href="#dots" x="1148" y="954" width="12" height="12" fill="#5a666c"/>
<text x="996" y="989" font-size="11.500" fill="#30383d">Inbox</text>

<!-- Col B (right part) -->
<g transform="translate(5.78 0) scale(.9953 1)">
<rect x="1184" y="60" width="382" height="22" fill="#3250ff"/>
<use href="#menu" x="1196" y="58" width="12" height="12" fill="#fff"/><text x="1220" y="68" font-size="10.200" fill="#fff" stroke="#fff" stroke-width=".15">Dark with search</text>
<rect x="1317" y="60" width="184" height="16" rx="1" fill="#5470ff"/><use href="#search" x="1320" y="58" width="12" height="12" fill="#fff"/><text x="1336" y="67" font-size="8.600" fill="#a8b6ff">What are you looking for</text>
<svg x="1184" y="60" width="382" height="22"><use href="#bell" x="333" y="-2" width="12" height="12" fill="#fff"/><use href="#av" x="353.500" y="-10" width="20" height="24"/></svg>
<rect class="sh" x="1184" y="98" width="382" height="36" fill="#fff"/>
<use href="#menu" x="1196" y="110" width="12" height="12" fill="#7a868c"/><text x="1220" y="120" class="b">Light with search</text>
<rect x="1317" y="104" width="184" height="24" rx="1" fill="#eef0f0"/><use href="#search" x="1320" y="110" width="12" height="12" fill="#6d787e"/><text x="1336" y="119" font-size="8.600" fill="#8a9296">What are you looking for</text>
<use href="#bell" x="1517" y="110" width="12" height="12" fill="#6d787e"/><use href="#av" x="1537.500" y="106" width="20" height="20"/>
<rect class="sh" x="1184" y="150" width="382" height="36" fill="#28323a"/><rect x="1312" y="150" width="40.500" height="36" fill="#3250ff"/>
<use href="#menu" x="1196" y="162" width="12" height="12" fill="#fff"/><text x="1220" y="163" font-size="6.300" fill="#79838a">Desktop dark</text><text x="1220" y="179" font-size="10.200" fill="#fff">Custom</text>
<use href="#event" x="1286" y="156" width="12" height="12" fill="#79838a"/><use href="#file" x="1326" y="156" width="12" height="12" fill="#fff"/><use href="#folder" x="1366.500" y="156" width="12" height="12" fill="#79838a"/><use href="#chat" x="1407" y="156" width="12" height="12" fill="#79838a"/><circle cx="1417" cy="158" r="4" fill="#ff5722"/><use href="#phone" x="1447" y="156" width="12" height="12" fill="#79838a"/>
<g fill="#c5ccd0"><text x="1292" y="179" class="tb">Tasks</text><text x="1332" y="179" class="tb" fill="#fff">Files</text><text x="1372.500" y="179" class="tb">Folders</text><text x="1413" y="179" class="tb">Chat</text><text x="1453" y="179" class="tb">Contacts</text></g>
<use href="#search" x="1493" y="162" width="12" height="12" fill="#fff"/><use href="#bell" x="1517" y="162" width="12" height="12" fill="#fff"/><use href="#av" x="1537.500" y="158" width="20" height="20"/>
<rect class="sh" x="1184" y="202" width="382" height="36" fill="#fff"/><rect x="1393" y="202" width="40" height="36" fill="#3250ff"/>
<use href="#menu" x="1196" y="214" width="12" height="12" fill="#7a868c"/><text x="1220" y="215" font-size="6.300" fill="#a7afb3">Desktop dark</text><text x="1220" y="231" font-size="10.200" fill="#30383d">Custom</text>
<use href="#home" x="1286" y="208" width="12" height="12" fill="#6d787e"/><use href="#file" x="1326" y="208" width="12" height="12" fill="#6d787e"/><use href="#folder" x="1366.500" y="208" width="12" height="12" fill="#6d787e"/><use href="#chato" x="1407" y="208" width="12" height="12" fill="#fff"/><use href="#phone" x="1447" y="208" width="12" height="12" fill="#6d787e"/>
<g fill="#40494f"><text x="1292" y="231" class="tb">Home</text><text x="1332" y="231" class="tb">Files</text><text x="1372.500" y="231" class="tb">Folders</text><text x="1413" y="231" class="tb" fill="#fff">Chat</text><text x="1453" y="231" class="tb">Contacts</text></g>
<use href="#search" x="1493" y="214" width="12" height="12" fill="#6d787e"/><use href="#bell" x="1517" y="214" width="12" height="12" fill="#6d787e"/><use href="#av" x="1537.500" y="210" width="20" height="20"/>
<rect x="1184" y="254" width="382" height="20" fill="#28323a"/><rect x="1312" y="254" width="65" height="20" fill="#3250ff"/>
<g fill="#b6bec3"><text x="1216" y="267" class="tb">Hotels</text><text x="1280" y="267" class="tb">Hostels</text><text x="1345" y="267" class="tb" fill="#cdd5ff">Eateries</text><text x="1409" y="267" class="tb">Attractions</text><text x="1473" y="267" class="tb">Museums</text><text x="1534" y="267" class="tb">Subite</text></g>
<path d="M1319 261l2.500 3-2.500 3" fill="none" stroke="#fff"/><path d="M1552 264h1.500m1-0h1.500m1-0h1.500" stroke="#cfd5d8" stroke-width="1.400"/>
<path d="M1566 260v8M1567 264h9m-3-3l3 3-3 3" stroke="#b8c2c7" fill="none"/>
<rect x="1184" y="290" width="382" height="20" fill="#fff"/><rect x="1312" y="290" width="65" height="20" fill="url(#grad)"/>
<g fill="#8a9296"><text x="1216" y="303" class="tb">Hotels</text><text x="1280" y="303" class="tb">Hostels</text><text x="1345" y="303" class="tb" fill="#ffc8dc">Eateries</text><text x="1409" y="303" class="tb">Attractions</text><text x="1473" y="303" class="tb">Museums</text><text x="1534" y="303" class="tb">Subite</text></g>
<path d="M1495 299h4l-2 2.500z" fill="#777"/><path d="M1552 300h1.500m1-0h1.500m1-0h1.500" stroke="#3a4347" stroke-width="1.400"/>
<path d="M1566 296v8M1567 300h9m-3-3l3 3-3 3" stroke="#b8c2c7" fill="none"/>
<rect x="1184" y="326" width="64" height="20" fill="url(#grad)"/><text x="1216" y="339" class="tb" fill="#ffd9ea">Active item</text>
<rect x="1290" y="326" width="64" height="20" fill="#fff"/><text x="1322" y="339" class="tb" fill="#8a9296">Subitem</text>
<rect x="1395" y="326" width="64" height="20" fill="#3250ff"/><text x="1427" y="339" class="tb" fill="#d5dcff">Active item</text>
<rect x="1501" y="326" width="65" height="20" fill="#28323a"/><text x="1533" y="339" class="tb" fill="#b6bec3">Subitem</text>
<svg x="1184" y="432" width="181" height="30"><rect width="181" height="28" fill="#3250ff"/><circle cx="90" cy="0" r="18.500" fill="#cfd5d8"/><circle cx="90" cy="-1" r="17" fill="#e1e8eb"/></svg>
<circle cx="1274" cy="432" r="14" fill="#ff5722"/><use href="#add" x="1269" y="427" width="10" height="10" fill="#ffd5c6"/>
<use href="#menu" x="1196" y="440" width="12" height="12" fill="#fff"/><use href="#search" x="1320" y="440" width="12" height="12" fill="#fff"/><use href="#dots" x="1344" y="440" width="12" height="12" fill="#fff"/>
<rect x="1184" y="490" width="181" height="28" fill="#28323a"/><use href="#trash" x="1192" y="498" width="12" height="12" fill="#fff"/><use href="#edit" x="1216" y="498" width="12" height="12" fill="#fff"/>
<svg x="1385" y="432" width="181" height="30"><rect width="181" height="28" fill="#ff5722"/><circle cx="22" cy="0" r="18.500" fill="#cfd5d8"/><circle cx="22" cy="-1" r="17" fill="#e1e8eb"/></svg>
<circle cx="1407" cy="432" r="14" fill="#28323a"/><use href="#add" x="1402" y="427" width="10" height="10" fill="#d5dadd"/>
<rect x="1385" y="490" width="181" height="28" fill="#28323a"/>
<!-- Tokyo card -->
<rect x="1186" y="558" width="181" height="360" fill="#fff"/>
<rect x="1186" y="558" width="181" height="12" fill="#edf0f0"/>
<rect x="1186" y="570" width="181" height="64" fill="url(#tk)"/><ellipse cx="1283" cy="632" rx="15" ry="8" fill="none" stroke="#d5ccc0" stroke-width="2"/>
<use href="#menu" x="1194" y="578" width="12" height="12" fill="#7a868c"/>
<text x="1222" y="605" font-size="12" fill="#3a4247">Summer trip to</text><text x="1222" y="619" font-size="12" fill="#3a4247">Tokyo and Kyoto</text>
<text x="1194" y="649" class="a">123 photos</text>
</g>
<!-- photo tiles B -->
<svg x="1190" y="656" width="56" height="84"><rect width="56" height="84" fill="#e4e4e4"/><g filter="url(#bl)"><path d="M0 18l8 4 8-2 4-12 4 12 2 20H0z" fill="#8e9a94"/><path d="M0 42h30L0 62z" fill="#f2f3f3"/><path d="M0 84V60l32-18h24v12L22 84z" fill="#7d8083"/><path d="M22 84l34-30v30z" fill="#eceded"/><path d="M36 68l10-4 6 5-8 4zM30 76l12-2-2 6z" fill="#6e6c68"/><path d="M26 36h20l4 12-20 4-6-6z" fill="#2b2a2e"/><rect x="27" y="40" width="2" height="5" fill="#c4202e"/><rect x="43" y="40" width="2" height="5" fill="#c4202e"/><rect x="30" y="46" width="14" height="5" fill="#b4b4b4"/></g></svg>
<svg x="1248" y="656" width="56" height="84"><rect width="56" height="84" fill="#2b3b3d"/><g filter="url(#bl)"><path d="M0 0h56v18H0z" fill="#c3c4b8"/><path d="M0 4h40v6H0z" fill="#e1e0d6"/><path d="M0 18h56v18H0z" fill="#3b586d"/><path d="M56 30v30L28 84h28z" fill="#3d4a32"/><path d="M4 38q28-6 24 6t-20 8 8 8 16-6q14-6 8-12" fill="none" stroke="#9db7b9" stroke-width="2"/><path d="M0 60q18-2 16 24H6Q10 66 0 66z" fill="#a7a69e"/></g></svg>
<svg x="1306" y="656" width="56" height="84"><rect width="56" height="84" fill="url(#sw)"/><g filter="url(#bl)"><path d="M0 18h56v18H0z" fill="#90796a"/><path d="M0 36h56v24H0z" fill="#8faaa6"/><path d="M0 62l40 2 16 8v12H0z" fill="#8a6a48"/><g fill="#eeeae2"><path d="M30 6l8 4-6 2z"/><path d="M38 16l10-2-4 6z"/><ellipse cx="36" cy="44" rx="6" ry="3"/><rect x="38" y="28" width="2" height="14"/><ellipse cx="20" cy="60" rx="4" ry="5"/><ellipse cx="32" cy="62" rx="4" ry="3"/><ellipse cx="48" cy="64" rx="4" ry="6"/></g><g fill="#3a3a38"><ellipse cx="6" cy="60" rx="3" ry="2"/><ellipse cx="16" cy="68" rx="3" ry="2"/></g></g></svg>
<svg x="1190" y="742" width="114" height="90"><rect width="114" height="90" fill="#cfe3ec"/><g filter="url(#bl)"><path d="M30 0h50l-16 10-26-2z" fill="#52aedb"/><path d="M62 0h40l-8 20-30 2z" fill="#eef4f5"/><path d="M0 10l24 2 18 12 14 4 18 2 20-18 20-8v38H0z" fill="#8a8077"/><path d="M60 44l54-24v24z" fill="#4c5f2f"/><path d="M0 8l16 6 14 22-6 10H0z" fill="#5a3426"/><path d="M0 42h114v6H0z" fill="#c5c2a8"/><path d="M0 48h114v18H0z" fill="#1f6a64"/><path d="M0 46h26l-8 4-18 2z" fill="#6f6e66"/><path d="M0 66l30-2 40 2 44 2v22H0z" fill="#867e6f"/><path d="M62 66h16l6 24H52z" fill="#aea89a"/><path d="M30 52l6-2 6 4 6 8-4 2H30z" fill="#2b3238"/><circle cx="38" cy="52" r="2.500" fill="#c4cdd4"/></g></svg>
<svg x="1306" y="742" width="56" height="90"><rect width="56" height="90" fill="#5fb2e2"/><g filter="url(#bl)"><path d="M24 0h32v12L40 14z" fill="#dfeef4"/><path d="M0 20l16-4 16 8 10-6 14 8v18H0z" fill="#3d7ca0"/><path d="M0 20l16-4 6 4-10 2zM32 22l10-4 14 8-14-2z" fill="#eef3f6"/><rect y="44" width="56" height="5" fill="#bcd0d6"/><path d="M0 49h56v5L20 60 0 66z" fill="#87794a"/><path d="M0 66l20-6 36-6v36H0z" fill="url(#lake)"/><ellipse cx="25" cy="76" rx="10" ry="5" fill="#5a5226"/><path d="M24 68h2v6h-2z" fill="#e06a3a"/></g></svg>
<svg x="1190" y="834" width="56" height="84"><rect width="56" height="84" fill="#e6eef2"/><g filter="url(#bl)"><path d="M0 0h40v12H0z" fill="#f4f7f8"/><path d="M8 26l34-4 14 22v18H30z" fill="#c8ced2"/><path d="M0 70l56 14H0z" fill="#eef3f6"/><path d="M36 12l14-4M40 14L26 40l18 22M40 14l14 30M28 30l28 30M26 40l30 4" fill="none" stroke="#555b60" stroke-width="1.200"/><rect x="38" y="8" width="12" height="3" fill="#5c4540" transform="rotate(-15 44 10)"/><rect x="12" y="58" width="16" height="14" fill="#a87a40"/><ellipse cx="22" cy="74" rx="14" ry="4" fill="#c99a54"/></g></svg>
<svg x="1248" y="834" width="56" height="84"><rect width="56" height="84" fill="#eeeff3"/><g filter="url(#bl)"><path d="M30 0h4l22 20v4z" fill="#6a6058"/><g fill="#fafafa" stroke="#b89a78" stroke-width="1.200"><circle cx="22" cy="8" r="7"/><circle cx="30" cy="30" r="7"/></g><circle cx="6" cy="30" r="4" fill="#f8f8f8"/><circle cx="50" cy="38" r="3" fill="#fafafa"/><circle cx="50" cy="52" r="5" fill="#f6f6f6"/><path d="M0 60h8q12 6 12 18l-4 6H0z" fill="#fbfbfb" stroke="#cfcfcf"/><path d="M24 52q14-4 12 8t6 18M24 52q-2 10 10 16" fill="none" stroke="#a86a44" stroke-width="1.500"/><circle cx="42" cy="78" r="3.500" fill="#8a4a28"/></g></svg>
<svg x="1306" y="834" width="56" height="84"><rect width="56" height="84" fill="url(#wh)"/><g filter="url(#bl)"><path d="M0 84V62l22-6 22 2 12 14v12z" fill="#203544"/><circle cx="32" cy="24" r="21" fill="#1c1613"/><ellipse cx="22" cy="36" rx="13" ry="15" fill="#8f5a38"/><path d="M14 40q8 7 15 1l-2 7h-9z" fill="#f2efe8"/><rect x="24" y="54" width="10" height="8" fill="#c47a34"/><path d="M10 58l10 26M34 48l6 36" stroke="#cdd4d6" stroke-width=".8"/></g></svg>
<g transform="translate(5.78 0) scale(.9953 1)">
<rect x="1186" y="934" width="181" height="65" fill="#fff"/><rect x="1186" y="934" width="181" height="12" fill="#edf0f0"/>
<use href="#st" x="1337" y="935" width="24" height="10" fill="#b8bec1"/>
<text x="1194" y="969" font-size="11.500" fill="#30383d">Inbox</text><text x="1194" y="987" class="a">Yesterday</text>
<!-- Article column -->
<rect x="1385" y="534" width="181" height="384" fill="#fff"/>
<use href="#menu" x="1393" y="578" width="12" height="12" fill="#7a868c"/><text x="1421" y="589" font-size="10.200" fill="#30383d">News</text>
<text x="1393" y="612" class="a" style="fill:#a2a2a2">2 hours ago</text>
<text x="1393" y="628" class="b">Google makes</text><text x="1393" y="642" class="b">two looks</text>
<text x="1393" y="657" class="a">When the top app bar scrolls, its</text><text x="1393" y="667" class="a">elevation above other elements</text><text x="1393" y="677" class="a">becomes apparent. The top app bar</text><text x="1393" y="687" class="a">disappears upon scrolling up, and</text><text x="1393" y="697" class="a">appears upon scrolling down.</text>
<text x="1393" y="719" class="a" style="fill:#a2a2a2">3 hours ago</text>
<text x="1393" y="734" class="b">Setproduct started to</text><text x="1393" y="748" class="b">upgrade a design system</text>
<text x="1393" y="763" class="a">The top app bar disappears upon</text><text x="1393" y="773" class="a">scrolling up, and appears upon</text><text x="1393" y="783" class="a">scrolling down.</text>
<text x="1393" y="805" class="a" style="fill:#a2a2a2">8 weeks ago</text>
<text x="1393" y="820" class="b">USSR tech startups</text><text x="1393" y="834" class="b">rebound</text>
<text x="1393" y="849" class="a">When the top app bar scrolls, its</text><text x="1393" y="859" class="a">elevation above other elements</text><text x="1393" y="869" class="a">becomes apparent. The top app bar</text><text x="1393" y="879" class="a">disappears upon scrolling up, and</text><text x="1393" y="889" class="a">appears upon scrolling down.</text>
<circle cx="1535" cy="734" r="22" fill="#8f8f94"/><path d="M1520 750l24-8 8 8q-10 8-22 6z" fill="#5d5f66"/><circle cx="1537" cy="731" r="8" fill="#f2f0ec"/><circle cx="1537" cy="731" r="5" fill="#8a3a12"/><path d="M1546 716q6 4 8 10l-6-2z" fill="#5e7a4a"/>
<circle cx="1535" cy="820" r="22" fill="#5f9bdc"/><ellipse cx="1528" cy="808" rx="10" ry="4" fill="#eef3f8"/><ellipse cx="1546" cy="820" rx="6" ry="3" fill="#eef3f8"/><path d="M1513 828h44l-4 10-18 4-18-4z" fill="#8a8a60"/><path d="M1535 801l4 32h-3l-1-7-1 7h-3z" fill="#4a3a30"/>
<svg x="1385" y="890" width="181" height="28"><rect width="181" height="28" fill="#ff5722"/><circle cx="22" cy="0" r="18.500" fill="#fff"/></svg>
<circle cx="1407" cy="889" r="14" fill="#28323a"/><use href="#mark" x="1401" y="883" width="12" height="12" fill="#fff"/>
<use href="#search" x="1473" y="898" width="12" height="12" fill="#fff"/><use href="#cart" x="1497" y="898" width="12" height="12" fill="#fff"/><use href="#bell" x="1521" y="898" width="12" height="12" fill="#fff"/><use href="#gear" x="1545" y="898" width="12" height="12" fill="#fff"/>
</g>

<!-- Rulers -->
<rect x="297" y="39" width="1334" height="20" fill="#fff"/><rect x="297" y="59" width="1334" height="1" fill="#e1e5e7"/>
<rect x="297" y="39" width="21" height="960" fill="#fff"/><rect x="318" y="39" width="1" height="960" fill="#dde2e5"/>
<text x="352" y="50" class="r">-2600</text><text x="402" y="50" class="r">-2500</text><text x="452" y="50" class="r">-2400</text><text x="502" y="50" class="r">-2300</text><text x="552" y="50" class="r">-2200</text><text x="602" y="50" class="r">-2100</text><text x="652" y="50" class="r">-2000</text><text x="702" y="50" class="r">-1900</text><text x="752" y="50" class="r">-1800</text><text x="802" y="50" class="r">-1700</text><text x="852" y="50" class="r">-1600</text><text x="902" y="50" class="r">-1500</text><text x="952" y="50" class="r">-1400</text><text x="1002" y="50" class="r">-1300</text><text x="1052" y="50" class="r">-1200</text><text x="1102" y="50" class="r">-1100</text><text x="1152" y="50" class="r">-1000</text><text x="1202" y="50" class="r">-900</text><text x="1252" y="50" class="r">-800</text><text x="1302" y="50" class="r">-700</text><text x="1352" y="50" class="r">-600</text><text x="1402" y="50" class="r">-500</text><text x="1452" y="50" class="r">-400</text><text x="1502" y="50" class="r">-300</text><text x="1552" y="50" class="r">-200</text><text x="1602" y="50" class="r">-100</text>
<path d="M352.500 55v4M402.500 55v4M452.500 55v4M502.500 55v4M552.500 55v4M602.500 55v4M652.500 55v4M702.500 55v4M752.500 55v4M802.500 55v4M852.500 55v4M902.500 55v4M952.500 55v4M1002.500 55v4M1052.500 55v4M1102.500 55v4M1152.500 55v4M1202.500 55v4M1252.500 55v4M1302.500 55v4M1352.500 55v4M1402.500 55v4M1452.500 55v4M1502.500 55v4M1552.500 55v4M1602.500 55v4" stroke="#c4c4c4"/>
<path d="M314 103h4M314 153h4M314 203h4M314 253h4M314 303h4M314 353h4M314 603h4M314 653h4M314 703h4M314 753h4M314 803h4M314 853h4M314 903h4M314 953h4" stroke="#c4c4c4"/>
<rect x="297" y="466" width="21" height="27" fill="#cceeff"/>
<text transform="rotate(-90 309 103)" x="309" y="103" class="rv">1400</text><text transform="rotate(-90 309 153)" x="309" y="153" class="rv">1500</text><text transform="rotate(-90 309 203)" x="309" y="203" class="rv">1600</text><text transform="rotate(-90 309 253)" x="309" y="253" class="rv">1700</text><text transform="rotate(-90 309 303)" x="309" y="303" class="rv">1800</text><text transform="rotate(-90 309 353)" x="309" y="353" class="rv">1900</text><text transform="rotate(-90 309 403)" x="309" y="403" class="rv" opacity=".25">2000</text>
<text transform="rotate(-90 309 448)" x="309" y="448" class="rv" style="fill:#30beff">2126</text><text transform="rotate(-90 309 511)" x="309" y="511" class="rv" style="fill:#30beff">2182</text>
<text transform="rotate(-90 309 553)" x="309" y="553" class="rv" opacity=".15">2300</text>
<text transform="rotate(-90 309 603)" x="309" y="603" class="rv">2400</text><text transform="rotate(-90 309 653)" x="309" y="653" class="rv">2500</text><text transform="rotate(-90 309 703)" x="309" y="703" class="rv">2600</text><text transform="rotate(-90 309 753)" x="309" y="753" class="rv">2700</text><text transform="rotate(-90 309 803)" x="309" y="803" class="rv">2800</text><text transform="rotate(-90 309 853)" x="309" y="853" class="rv">2900</text><text transform="rotate(-90 309 903)" x="309" y="903" class="rv">3000</text><text transform="rotate(-90 309 953)" x="309" y="953" class="rv">3100</text><text transform="rotate(-90 309 1003)" x="309" y="1003" class="rv">3200</text>

<!-- Left panel -->
<rect x="0" y="39" width="297" height="960" fill="#fdfdfd"/><rect x="297" y="39" width="1" height="960" fill="#e4e4e4"/>
<rect x="0" y="69" width="297" height="1" fill="#e8e8e8"/>
<path d="M6.500 52.500h6l-3 3.500z" fill="#333"/><text x="20" y="58" class="s">Pages</text><path d="M278.500 49v9.500M273.500 53.500h10" stroke="#444"/>
<path d="M20.500 78h6l.5 9-7 .5z M22 88.500h8v1.500h-8z" fill="#333"/><text x="34" y="88" class="s">Read firsrt!</text>
<text x="20" y="118" class="s">Charts Constructor</text><text x="20" y="148" class="s">Colors &amp; Backgrounds</text><text x="20" y="178" class="s">Datepicker &amp; Timepicker</text><text x="20" y="208" class="s">Expansion panel</text><text x="20" y="238" class="s">Grid list</text><text x="20" y="268" class="s">Icons</text><text x="20" y="298" class="s">Lists</text><text x="20" y="328" class="s">Layouts: Mobile, Tablet, Desktop</text><text x="20" y="358" class="s">Menus &amp; Dropdown</text><text x="20" y="388" class="s">Misc</text><text x="20" y="418" class="s">Navigation drawer</text>
<rect x="0" y="419" width="297" height="1" fill="#e4e4e4"/>
<rect x="0" y="420" width="297" height="30" fill="#907cff"/><path d="M8 431.500l3.500 3.500-3.500 3.500z" fill="#fff"/><path d="M26.500 427l7.500 8-7.500 8-7.500-8z" fill="none" stroke="#fff"/>
<text x="42" y="439" class="s" style="fill:#fff" textLength="45">Buttons •</text><rect x="90" y="429.500" width="10.500" height="11" fill="none" stroke="#fff" stroke-width=".9"/><text x="91" y="437.500" font-size="5.800" fill="#fff">OK</text><text x="101" y="439" class="s" style="fill:#fff">/FAB/Accent</text>
<rect x="0" y="450" width="297" height="30" fill="#efefef"/><path d="M6.500 463.500h6l-3 3.500z" fill="#333"/><use href="#frm" x="19" y="457" width="16" height="16" fill="none" stroke="#333"/><text x="42" y="469" class="s">Buttons</text>
<g fill="none" stroke="#222" stroke-dasharray="3 2.500"><rect x="38.500" y="488.500" width="13" height="13"/><rect x="38.500" y="518.500" width="13" height="13"/></g>
<text x="60" y="499" class="s">#Multicomponent expand</text><text x="60" y="529" class="s">#Multicomponent expand</text>
<path d="M26 492l3 3-3 3zM26 522l3 3-3 3zM26 552l3 3-3 3zM26 582l3 3-3 3zM26 612l3 3-3 3zM26 642l3 3-3 3zM26 672l3 3-3 3zM26 702l3 3-3 3zM26 732l3 3-3 3zM26 762l3 3-3 3zM26 792l3 3-3 3zM26 822l3 3-3 3zM26 852l3 3-3 3zM26 882l3 3-3 3zM26 912l3 3-3 3zM26 942l3 3-3 3z" fill="#c8c8c8"/>
<g fill="none" stroke="#907cff"><use href="#cmp" x="37" y="547" width="16" height="16"/><use href="#cmp" x="37" y="577" width="16" height="16"/><use href="#cmp" x="37" y="607" width="16" height="16"/><use href="#cmp" x="37" y="637" width="16" height="16"/><use href="#cmp" x="37" y="667" width="16" height="16"/><use href="#cmp" x="37" y="697" width="16" height="16"/><use href="#cmp" x="37" y="727" width="16" height="16"/><use href="#cmp" x="37" y="757" width="16" height="16"/><use href="#cmp" x="37" y="787" width="16" height="16"/><use href="#cmp" x="37" y="817" width="16" height="16"/><use href="#cmp" x="37" y="847" width="16" height="16"/><use href="#cmp" x="37" y="877" width="16" height="16"/><use href="#cmp" x="37" y="907" width="16" height="16"/></g>
<g fill="none" stroke="#333" stroke-width=".9"><rect x="108" y="549.500" width="10.500" height="11"/><rect x="108" y="579.500" width="10.500" height="11"/><rect x="108" y="609.500" width="10.500" height="11"/><rect x="108" y="639.500" width="10.500" height="11"/><rect x="108" y="669.500" width="10.500" height="11"/><rect x="108" y="699.500" width="10.500" height="11"/><rect x="108" y="729.500" width="10.500" height="11"/><rect x="108" y="759.500" width="10.500" height="11"/><rect x="108" y="789.500" width="10.500" height="11"/><rect x="108" y="819.500" width="10.500" height="11"/><rect x="108" y="849.500" width="10.500" height="11"/><rect x="108" y="879.500" width="10.500" height="11"/><rect x="108" y="909.500" width="10.500" height="11"/></g>
<g font-size="5.800" fill="#333"><text x="109" y="557.500">OK</text><text x="109" y="587.500">OK</text><text x="109" y="617.500">OK</text><text x="109" y="647.500">OK</text><text x="109" y="677.500">OK</text><text x="109" y="707.500">OK</text><text x="109" y="737.500">OK</text><text x="109" y="767.500">OK</text><text x="109" y="797.500">OK</text><text x="109" y="827.500">OK</text><text x="109" y="857.500">OK</text><text x="109" y="887.500">OK</text><text x="109" y="917.500">OK</text></g>
<text x="60" y="559" class="s" textLength="45">Buttons •</text><text x="119.500" y="559" class="s">/Custom/Rounded/Light</text>
<text x="60" y="589" class="s" textLength="45">Buttons •</text><text x="119.500" y="589" class="s">/Custom/Rounded/Dark</text>
<text x="60" y="619" class="s" textLength="45">Buttons •</text><text x="119.500" y="619" class="s">/Custom/Rounded/Caption</text>
<text x="60" y="649" class="s" textLength="45">Buttons •</text><text x="119.500" y="649" class="s">/Custom/Rectangle/Small Light</text>
<text x="60" y="679" class="s" textLength="45">Buttons •</text><text x="119.500" y="679" class="s">/Custom/Rectangle/Small Dark</text>
<text x="60" y="709" class="s" textLength="45">Buttons •</text><text x="119.500" y="709" class="s">/Custom/Rectangle/Light</text>
<text x="60" y="739" class="s" textLength="45">Buttons •</text><text x="119.500" y="739" class="s">/Custom/Rectangle/Dark</text>
<text x="60" y="769" class="s" textLength="45">Buttons •</text><text x="119.500" y="769" class="s">/Container/Iconic Right/Default</text>
<text x="60" y="799" class="s" textLength="45">Buttons •</text><text x="119.500" y="799" class="s">/Container/Iconic Right/Accent</text>
<text x="60" y="829" class="s" textLength="45">Buttons •</text><text x="119.500" y="829" class="s">/Container/Iconic Right/Primary</text>
<text x="60" y="859" class="s" textLength="45">Buttons •</text><text x="119.500" y="859" class="s">/Container/Iconic Left/Default</text>
<text x="60" y="889" class="s" textLength="45">Buttons •</text><text x="119.500" y="889" class="s">/Container/Iconic Left/Accent</text>
<text x="60" y="919" class="s" textLength="45">Buttons •</text><text x="119.500" y="919" class="s">/Container/Iconic Left/Primary</text>
<use href="#frm" x="37" y="937" width="16" height="16" fill="none" stroke="#222"/><text x="60" y="949" class="s">Templates/Buttons/6</text>
<rect x="0" y="955" width="297" height="44" fill="#fdfdfd"/><rect x="0" y="955" width="297" height="1" fill="#e4e4e4"/>
<rect x="0" y="955" width="42" height="44" fill="#30beff"/>
<path d="M21 969l7.500 5-7.500 5-7.500-5zM13.500 978l7.500 5 7.500-5" fill="none" stroke="#fff" stroke-width="1.300"/>
<use href="#cmp" x="54.500" y="968.500" width="18" height="18" fill="none" stroke="#bdbdbd"/>
<path d="M104.500 974q-4-3-8-2v13q4-1 8 2 4-3 8-2v-13q-4-1-8 2zM104.500 974v13" fill="none" stroke="#bdbdbd"/>

<!-- Design panel + menus -->
<g transform="translate(5.78 0) scale(.9953 1)">
<rect x="1632" y="39" width="225" height="960" fill="#fcfcfc"/><rect x="1632" y="39" width="1" height="960" fill="#e4e7e9"/>
<path d="M1703 39v27a2 2 0 0 0 2 2h152" fill="none" stroke="#dcdfe1"/>
<text x="1645.500" y="57" font-size="10.500" letter-spacing=".7" fill="#5a5a5a">DESIGN</text><text x="1717" y="57" font-size="10.500" letter-spacing=".7" fill="#bdbdbd">PROTOTYPE</text><text x="1815" y="57" font-size="10.500" letter-spacing=".7" fill="#bdbdbd">CODE</text>
<g fill="#444"><rect x="1649" y="84" width=".9" height="18"/><rect x="1653" y="88" width="9.500" height="3"/><rect x="1653" y="95" width="7" height="3"/>
<rect x="1681.500" y="84" width=".9" height="18"/><rect x="1675" y="88" width="14" height="3"/><rect x="1677" y="95" width="10" height="3"/>
<rect x="1713.500" y="84" width=".9" height="18"/><rect x="1700" y="88" width="10.500" height="3"/><rect x="1703" y="95" width="7.500" height="3"/>
<rect x="1724.500" y="85.500" width="18" height=".9"/><rect x="1728.500" y="88" width="3" height="11"/><rect x="1735.500" y="88" width="3" height="7"/>
<rect x="1751" y="92.500" width="18" height=".9"/><rect x="1755" y="86" width="3" height="14"/><rect x="1762" y="88" width="3" height="10"/>
<rect x="1776" y="99.500" width="18" height=".9"/><rect x="1780" y="87" width="3" height="11"/><rect x="1787" y="91" width="3" height="7"/>
<rect x="1805" y="84" width=".9" height="18"/><rect x="1818" y="84" width=".9" height="18"/><rect x="1809.500" y="88" width="4" height="10"/>
<rect x="1828" y="86" width="18" height=".9"/><rect x="1828" y="99" width="18" height=".9"/><rect x="1833" y="91" width="9" height="4"/></g>
<rect x="1632" y="117" width="225" height="1" fill="#e6e8e9"/>
<rect x="1644.500" y="130.500" width="198" height="22.500" rx="2" fill="#fff" stroke="#cfd3d5"/><text x="1649" y="146" font-size="11.200" fill="#555">Frame</text><path d="M1829.500 141l2.500 2.500 2.500-2.500" fill="none" stroke="#555"/>
<rect x="1619.500" y="246" width="6" height="170" rx="3" fill="#a9abad"/>
<rect x="1636" y="161" width="225" height="830" rx="4" fill="#000"/>
<rect x="1636" y="197" width="221" height="1" fill="#2a2a2a"/><rect x="1636" y="354" width="221" height="1" fill="#2a2a2a"/>
<text x="1672" y="182" class="m">Detach Instance</text><text x="1832" y="182" class="m" text-anchor="end">Ctrl+Alt+B</text>
<text x="1672" y="219" class="m" style="fill:#8a8a8a;stroke:none">Best match</text>
<path d="M1651 239l2.500 2.500 5-5" fill="none" stroke="#fff" stroke-width="1.600"/>
<text x="1672" y="243" class="m">Accent</text><text x="1672" y="267" class="m">Dark</text><text x="1672" y="291" class="m">Default</text><text x="1672" y="315" class="m">Disabled</text><text x="1672" y="339" class="m">Primary</text>
<rect x="1636" y="409" width="221" height="24" fill="#30beff"/><circle cx="1654" cy="420" r="2" fill="#fff"/>
<text x="1672" y="376" class="m">App bar</text><text x="1672" y="400" class="m">Bottom nav •</text><text x="1672" y="424" class="m" style="fill:#fff">Buttons •</text><text x="1672" y="448" class="m">Cards •</text><text x="1672" y="472" class="m">Charts •</text><text x="1672" y="496" class="m">Chips • Badges •</text><text x="1672" y="520" class="m">Colors •</text><text x="1672" y="544" class="m">Datepicker •</text><text x="1672" y="568" class="m">Dialogs •</text><text x="1672" y="592" class="m">Drawer •</text><text x="1672" y="616" class="m">Expansion panel •</text><text x="1672" y="640" class="m">Grid list •</text><text x="1672" y="664" class="m">Icons</text><text x="1672" y="688" class="m">Layouts •</text><text x="1672" y="712" class="m">List</text><text x="1672" y="736" class="m">Lists •</text><text x="1672" y="760" class="m">Menus •</text><text x="1672" y="784" class="m">Misc</text><text x="1672" y="808" class="m">Placeholders •</text><text x="1672" y="832" class="m">Selection •</text><text x="1672" y="856" class="m">Snackbar •</text><text x="1672" y="880" class="m">Steppers</text><text x="1672" y="904" class="m">Tables •</text><text x="1672" y="928" class="m">Tabs •</text><text x="1672" y="952" class="m">Text fields •</text><text x="1672" y="976" class="m">Typography</text>
<use href="#ch" x="1829" y="372"/><use href="#ch" x="1829" y="396"/><use href="#chw" x="1829" y="420"/><use href="#ch" x="1829" y="444"/><use href="#ch" x="1829" y="468"/><use href="#ch" x="1829" y="492"/><use href="#ch" x="1829" y="516"/><use href="#ch" x="1829" y="540"/><use href="#ch" x="1829" y="564"/><use href="#ch" x="1829" y="588"/><use href="#ch" x="1829" y="612"/><use href="#ch" x="1829" y="636"/><use href="#ch" x="1829" y="660"/><use href="#ch" x="1829" y="684"/><use href="#ch" x="1829" y="708"/><use href="#ch" x="1829" y="732"/><use href="#ch" x="1829" y="756"/><use href="#ch" x="1829" y="780"/><use href="#ch" x="1829" y="804"/><use href="#ch" x="1829" y="828"/><use href="#ch" x="1829" y="852"/><use href="#ch" x="1829" y="876"/><use href="#ch" x="1829" y="900"/><use href="#ch" x="1829" y="924"/><use href="#ch" x="1829" y="948"/><use href="#ch" x="1829" y="972"/>
<g fill="#f5f5f5">
<rect x="1713.500" y="371" width="8.500" height="1.600"/>
<path d="M1741 390h3v3.500h2l-3.500 3.500-3.500-3.500h2zM1738 398h10.500v3H1738z"/>
<rect x="1714" y="463" width="11" height="10"/>
<rect x="1755" y="489" width="12" height="6" rx="2"/>
<path d="M1714 512q3-4 7-3t3 5l-3 6-3 1q-4-2-4-9z"/>
<rect x="1716" y="585" width="6" height="1.100"/><rect x="1716" y="588" width="6" height="1.100"/><rect x="1716" y="591" width="6" height="1.100"/>
<path d="M1762 607h9.500l-4.750 10z"/>
<rect x="1720" y="680" width="11" height="7.500"/><rect x="1722" y="688" width="7" height="1.500"/><rect x="1736" y="679" width="4.500" height="10.500" rx="1"/>
<rect x="1706" y="728" width="2" height="1"/><rect x="1709.500" y="728" width="5" height="1"/><rect x="1706" y="732" width="2" height="1"/><rect x="1709.500" y="732" width="5" height="1"/><rect x="1706" y="736" width="2" height="1"/><rect x="1709.500" y="736" width="5" height="1"/>
<rect x="1715.500" y="752" width="1.500" height="1.500"/><rect x="1715.500" y="755.500" width="1.500" height="1.500"/><rect x="1715.500" y="759" width="1.500" height="1.500"/>
<rect x="1699" y="783" width="1.500" height="1.500"/><rect x="1702" y="783" width="1.500" height="1.500"/><rect x="1705" y="783" width="1.500" height="1.500"/>
<rect x="1730" y="847" width="2" height="2"/><rect x="1728.500" y="851" width="5" height="1"/><rect x="1727" y="855" width="8" height="1"/>
<circle cx="1721" cy="876.500" r="2.300"/><rect x="1723" y="876" width="3" height="1"/>
<rect x="1706" y="923" width="8" height="1.500"/><rect x="1706" y="927" width="8" height="1.500"/>
<rect x="1733" y="943" width="12.500" height="9"/>
</g>
<g fill="none" stroke="#f5f5f5">
<rect x="1720.500" y="415" width="10.500" height="10.500"/>
<rect x="1710.500" y="439.500" width="9" height="9.500" rx="2"/>
<path d="M1734.500 537.500h10v8h-10zM1737 534.500v3M1742 534.500v3"/>
<rect x="1718.500" y="561.500" width="10" height="6.500"/><path d="M1723.500 561.500v-3"/>
<path d="M1719.500 631.500h9.500v9.500h-9.500zM1724.300 631.500v9.500M1719.500 636.300h9.500"/>
<path d="M1746.500 799.500h9v9.500h-9zM1746.500 799.500l9 9.500M1755.500 799.500l-9 9.500"/>
<path d="M1727.500 823.500h8.500v8.500h-8.500zM1729.500 828l1.500 1.500 3-3.500"/>
<circle cx="1727.800" cy="876.500" r="2"/>
<path d="M1714.500 895.500h9.500v9.500h-9.500zM1714.500 900h9.500"/>
</g>
<rect x="1735" y="947" width="8.500" height="2.500" fill="#000"/><text x="1722.500" y="422.500" font-size="5.800" fill="#fff">OK</text>
<path d="M1717 466l2.500 2.500 3-3.500" fill="none" stroke="#000" stroke-width=".8"/>
<rect x="1435" y="403" width="201" height="276" rx="3" fill="#000"/>
<rect x="1435" y="457" width="201" height="24" fill="#30beff"/><circle cx="1453" cy="468" r="2" fill="#fff"/>
<text x="1471" y="424" class="m">Container</text><text x="1471" y="448" class="m">Custom</text><text x="1471" y="472" class="m" style="fill:#fff">FAB</text><text x="1471" y="496" class="m">Flat</text><text x="1471" y="520" class="m">Ghost</text><text x="1471" y="544" class="m">Raised</text><text x="1471" y="568" class="m">Raised Icon L</text><text x="1471" y="592" class="m">Raised Icon R</text><text x="1471" y="616" class="m">Social</text><text x="1471" y="640" class="m">Square</text><text x="1471" y="664" class="m">Toggle</text>
<use href="#ch" x="1615" y="420"/><use href="#ch" x="1615" y="444"/><use href="#chw" x="1615" y="468"/><use href="#ch" x="1615" y="492"/><use href="#ch" x="1615" y="516"/><use href="#ch" x="1615" y="540"/><use href="#ch" x="1615" y="564"/><use href="#ch" x="1615" y="588"/><use href="#ch" x="1615" y="612"/><use href="#ch" x="1615" y="636"/><use href="#ch" x="1615" y="660"/>
<rect x="1234" y="451" width="201" height="132" rx="3" fill="#000"/>
<rect x="1234" y="457" width="201" height="24" fill="#30beff"/>
<path d="M1249 468l2.500 2.500 5-5.500" fill="none" stroke="#fff" stroke-width="1.800"/>
<text x="1270" y="472" class="m" style="fill:#fff">Accent</text><text x="1270" y="496" class="m">Dark</text><text x="1270" y="520" class="m">Default</text><text x="1270" y="544" class="m">Disabled</text><text x="1270" y="568" class="m">Primary</text>
</g>

<!-- Top bar -->
<rect x="0" y="0" width="1847" height="39" fill="#2c2c2c"/>
<path d="M14 12.500h14M14 18h14M14 23.500h14" stroke="#fff" stroke-width="1"/>
<rect x="42" y="0" width="48" height="39" fill="#30beff"/>
<path d="M57.500 11.500l12 7-5.500 1.500-3.500 5z" fill="none" stroke="#fff"/><path d="M79 17l2 2 2-2" fill="none" stroke="#fff"/>
<path d="M105.500 13h11v11h-11zM105.500 10v1.500M116.500 10v1.500M105.500 25.500V27M116.500 25.500V27M102.500 13h1.500M102.500 24h1.500M118 13h1.500M118 24h1.500" fill="none" stroke="#fff"/><path d="M127 17l2 2 2-2" fill="none" stroke="#c9c9c9"/>
<rect x="151.500" y="10.500" width="15.500" height="15" fill="none" stroke="#fff"/><path d="M175 17l2 2 2-2" fill="none" stroke="#c9c9c9"/>
<path d="M199.500 10.500l11 4.500 3 8.500-3 1.500-8.500-3.500zM199.500 10.500l7 7" fill="none" stroke="#fff"/><circle cx="206.500" cy="17.500" r="1.300" fill="#fff"/><path d="M223 17l2 2 2-2" fill="none" stroke="#c9c9c9"/>
<path d="M248 11v-1h13v1M254.500 10v15.500M251.500 25.500h6" fill="none" stroke="#fff"/>
<path d="M288 25.500q2-1.500 2-3.500a8.500 8 0 1 1 3 3q-3 .5-5 .5z" fill="none" stroke="#fff"/>
<path d="M815.500 12.500h11v11h-11z" fill="none" stroke="#777"/><g fill="#2c2c2c" stroke="#777"><circle cx="815.500" cy="12.500" r="2"/><circle cx="826.500" cy="12.500" r="2"/><circle cx="815.500" cy="23.500" r="2"/><circle cx="826.500" cy="23.500" r="2"/></g>
<path d="M862 9.500l-8.500 8.500 8.500 8.500M860 18q9-2 9 4v4M863 14l-3 4 4 3" fill="none" stroke="#666"/>
<use href="#cmp" x="896.500" y="9" width="18" height="18" fill="none" stroke="#2fc08f"/>
<circle cx="947" cy="18" r="7.700" fill="none" stroke="#2fc08f" stroke-width="1.100"/><path d="M947 10.300a7.700 7.700 0 0 0 0 15.400q3-3.500 3-7.700t-3-7.700z" fill="#2fc08f"/>
<path d="M981 10h9v7h7v9h-9v-7h-7z" fill="#2fc08f"/><path d="M1005 17l2 2 2-2" fill="none" stroke="#2fc08f"/>
<path d="M1030 13h14M1033.500 9.500v14h13M1044 10l-13 14M1043.500 13v14" fill="none" stroke="#666"/>
<g transform="translate(5.78 0) scale(.9953 1)">
<circle cx="1577" cy="18" r="15" fill="#28b98c"/><circle cx="1577" cy="18" r="13" fill="#2c2c2c"/><use href="#av" x="1565" y="6" width="24" height="24"/>
<rect x="1610" y="3" width="52" height="30" rx="2" fill="#30beff"/><text x="1636" y="21.500" font-size="11" font-weight="700" text-anchor="middle" fill="#fff">Share</text>
<circle cx="1695" cy="18" r="12.700" fill="none" stroke="#e8e8e8"/><path d="M1691 11.500l9.500 6.500-9.500 6.500z" fill="none" stroke="#e8e8e8"/>
<path d="M1730.500 18q6.500-6 13 0-6.500 6-13 0z" fill="none" stroke="#fff" stroke-width="1.100"/><circle cx="1737" cy="18" r="2.200" fill="#fff"/>
<text x="1772.500" y="22" font-size="10.500" font-weight="700" fill="#eee">50%</text><path d="M1799 17l2 2 2-2" fill="none" stroke="#c9c9c9"/>
<path d="M1835 14h10v10h-10zM1835 10v2M1835 25.500V27M1831 14h2M1831 24h2M1847 24h-1M1839 18l7-8M1841 10h5v5" fill="none" stroke="#fff"/>
</g>
</svg>
</body></html>
